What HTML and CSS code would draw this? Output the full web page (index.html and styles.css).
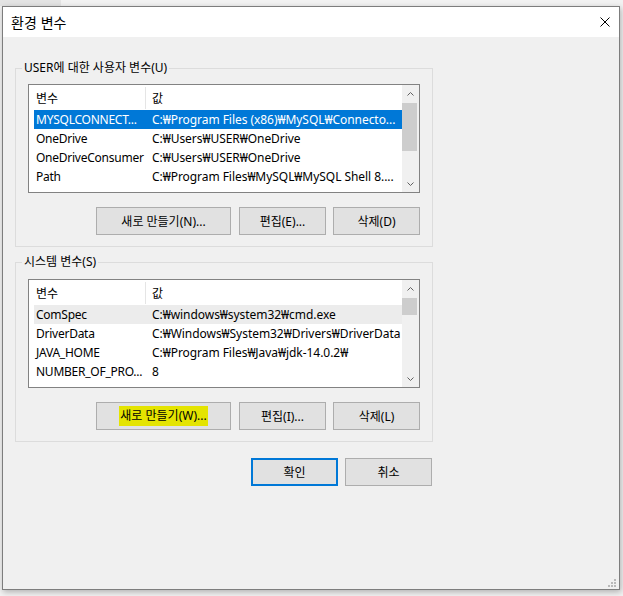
FILE: index.html
```html
<!DOCTYPE html>
<html lang="ko">
<head>
<meta charset="utf-8">
<title>환경 변수</title>
<link rel="stylesheet" href="styles.css">
</head>
<body>
<div class="backdrop"></div>
<div class="window">
  <div class="titlebar">
    <span class="title">환경 변수</span>
    <svg class="close" width="10" height="10" viewBox="0 0 10 10"><path d="M0.5 0.5L9.5 9.5M9.5 0.5L0.5 9.5" stroke="#000" stroke-width="1" fill="none"/></svg>
  </div>
  <div class="content">
    <fieldset class="group">
      <legend>USER에 대한 사용자 변수(U)</legend>
      <div class="list">
        <div class="list-body">
          <div class="header"><span class="c1">변수</span><span class="sep"></span><span class="c2">값</span></div>
          <div class="row sel"><span class="c1">MYSQLCONNECT...</span><span class="c2">C:₩Program Files (x86)₩MySQL₩Connecto...</span></div>
          <div class="row"><span class="c1">OneDrive</span><span class="c2">C:₩Users₩USER₩OneDrive</span></div>
          <div class="row"><span class="c1">OneDriveConsumer</span><span class="c2">C:₩Users₩USER₩OneDrive</span></div>
          <div class="row"><span class="c1">Path</span><span class="c2">C:₩Program Files₩MySQL₩MySQL Shell 8....</span></div>
        </div>
        <div class="scroll">
          <div class="arrow"><svg width="7" height="4" viewBox="0 0 7 4"><path d="M0.5 3.5L3.5 0.5L6.5 3.5" stroke="#606060" fill="none"/></svg></div>
          <div class="track"><div class="thumb thumb-big"></div></div>
          <div class="arrow"><svg width="7" height="4" viewBox="0 0 7 4"><path d="M0.5 0.5L3.5 3.5L6.5 0.5" stroke="#606060" fill="none"/></svg></div>
        </div>
      </div>
      <div class="buttons">
        <div class="btn btn-wide">새로 만들기(N)...</div>
        <div class="btn btn-mid">편집(E)...</div>
        <div class="btn">삭제(D)</div>
      </div>
    </fieldset>

    <fieldset class="group group2">
      <legend>시스템 변수(S)</legend>
      <div class="list">
        <div class="list-body">
          <div class="header"><span class="c1">변수</span><span class="sep"></span><span class="c2">값</span></div>
          <div class="row dim"><span class="c1">ComSpec</span><span class="c2">C:₩windows₩system32₩cmd.exe</span></div>
          <div class="row"><span class="c1">DriverData</span><span class="c2">C:₩Windows₩System32₩Drivers₩DriverData</span></div>
          <div class="row"><span class="c1">JAVA_HOME</span><span class="c2">C:₩Program Files₩Java₩jdk-14.0.2₩</span></div>
          <div class="row"><span class="c1">NUMBER_OF_PRO...</span><span class="c2">8</span></div>
        </div>
        <div class="scroll">
          <div class="arrow"><svg width="7" height="4" viewBox="0 0 7 4"><path d="M0.5 3.5L3.5 0.5L6.5 3.5" stroke="#606060" fill="none"/></svg></div>
          <div class="track"><div class="thumb thumb-small"></div></div>
          <div class="arrow"><svg width="7" height="4" viewBox="0 0 7 4"><path d="M0.5 0.5L3.5 3.5L6.5 0.5" stroke="#606060" fill="none"/></svg></div>
        </div>
      </div>
      <div class="buttons">
        <div class="btn btn-wide"><span class="hl">새로 만들기(W)...</span></div>
        <div class="btn btn-mid">편집(I)...</div>
        <div class="btn">삭제(L)</div>
      </div>
    </fieldset>

    <div class="footer">
      <div class="btn btn-ok">확인</div>
      <div class="btn">취소</div>
    </div>
  </div>
  <svg class="grip" width="9" height="9" viewBox="0 0 9 9">
    <rect x="6" y="0" width="2" height="2" fill="#b9b9b9"/>
    <rect x="3" y="3" width="2" height="2" fill="#b9b9b9"/>
    <rect x="6" y="3" width="2" height="2" fill="#b9b9b9"/>
    <rect x="0" y="6" width="2" height="2" fill="#b9b9b9"/>
    <rect x="3" y="6" width="2" height="2" fill="#b9b9b9"/>
    <rect x="6" y="6" width="2" height="2" fill="#b9b9b9"/>
  </svg>
</div>
</body>
</html>
```

FILE: styles.css
```css
* {
  box-sizing: border-box;
}

html, body {
  margin: 0;
}

body {
  width: 623px;
  height: 596px;
  padding: 6px 0 0 2px;
  background: #f2f2f2;
  font-family: "Noto Sans", "Noto Sans CJK KR", sans-serif;
  font-size: 12px;
  color: #000;
  position: relative;
  overflow: hidden;
}

.backdrop {
  position: absolute;
  left: 0;
  top: 0;
  width: 61px;
  height: 6px;
  background: #e4e4e4;
}

.window {
  position: relative;
  width: 618px;
  height: 584px;
  border: 1px solid #7d7d7d;
  background: #f0f0f0;
  box-shadow: 1px 2px 6px rgba(0, 0, 0, 0.28);
}

.titlebar {
  height: 30px;
  background: #fff;
  display: flex;
  align-items: center;
  justify-content: space-between;
  padding: 0 9px 0 8px;
}

.title {
  font-family: "Noto Sans CJK KR", sans-serif;
  font-size: 14px;
}

.close {
  display: block;
}

.content {
  padding: 23px 0 0 12px;
}

.group {
  width: 418px;
  margin: 0;
  padding: 8px 12px 11px 12px;
  border: 1px solid #dcdcdc;
  min-width: 0;
}

.group2 {
  margin-top: 7px;
  padding-top: 9px;
}

.group legend {
  padding: 0 2px;
  margin-left: -6px;
  height: 16px;
  line-height: 16px;
}

.list {
  display: flex;
  height: 109px;
  border: 1px solid #828282;
  background: #fff;
}

.list-body {
  flex: 1;
  overflow: hidden;
}

.header,
.row {
  display: flex;
  margin-left: 5px;
  white-space: nowrap;
}

.header {
  height: 25px;
  align-items: center;
}

.header .sep {
  width: 1px;
  height: 22px;
  background: #e5e5e5;
  align-self: flex-start;
  margin-top: 2px;
}

.header .c2 {
  padding-left: 6px;
}

.row {
  height: 19px;
  line-height: 19px;
}

.c1 {
  width: 111px;
  flex: none;
  padding-left: 2px;
  overflow: hidden;
}

.row .c1 {
  letter-spacing: -0.25px;
}

.c2 {
  flex: 1;
  padding-left: 7px;
  overflow: hidden;
}

.row .c2 {
  letter-spacing: -0.05px;
}

.row.sel {
  background: #0078d7;
  color: #fff;
}

.row.dim {
  background: #ececec;
}

.scroll {
  width: 17px;
  flex: none;
  background: #f0f0f0;
  display: flex;
  flex-direction: column;
}

.arrow {
  height: 17px;
  display: flex;
  align-items: center;
  justify-content: center;
}

.arrow svg {
  display: block;
}

.track {
  flex: 1;
  padding-top: 1px;
}

.thumb {
  width: 15px;
  background: #cdcdcd;
}

.thumb-big {
  height: 48px;
}

.thumb-small {
  height: 17px;
}

.buttons {
  display: flex;
  justify-content: flex-end;
  margin-top: 14px;
}

.btn {
  width: 87px;
  height: 28px;
  border: 1px solid #adadad;
  background: #e1e1e1;
  display: flex;
  align-items: center;
  justify-content: center;
  white-space: nowrap;
}

.btn-wide {
  width: 135px;
  margin-right: 8px;
}

.btn-mid {
  margin-right: 7px;
}

.hl {
  background: #e4e400;
  line-height: 20px;
  padding: 0 1px;
}

.footer {
  width: 418px;
  display: flex;
  justify-content: flex-end;
  gap: 7px;
  padding-right: 1px;
  margin-top: 16px;
}

.btn-ok {
  border: 2px solid #0078d7;
}

.grip {
  position: absolute;
  right: 2px;
  bottom: 1px;
  display: block;
}
```
